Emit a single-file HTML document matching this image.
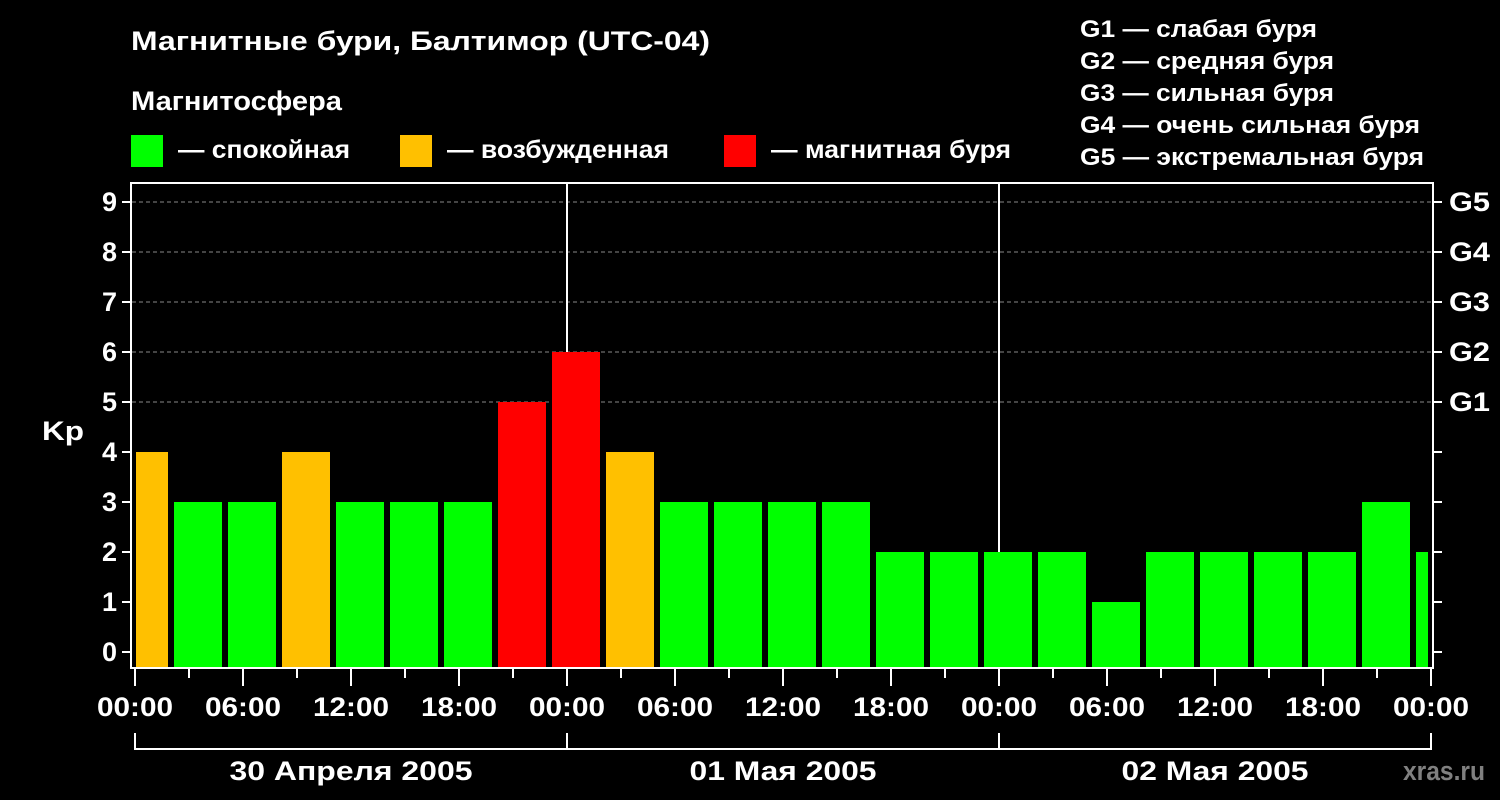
<!DOCTYPE html>
<html><head><meta charset="utf-8"><style>
html,body{margin:0;padding:0;background:#000;}
svg{display:block;}
text{font-family:"Liberation Sans",Arial,sans-serif;font-weight:bold;fill:#fff;}
</style></head><body>
<svg width="1500" height="800" viewBox="0 0 1500 800" xmlns="http://www.w3.org/2000/svg">
<rect width="1500" height="800" fill="#000"/>
<text x="131" y="50" font-size="27" textLength="579" lengthAdjust="spacingAndGlyphs">Магнитные бури, Балтимор (UTC-04)</text>
<text x="131" y="110" font-size="27" textLength="211" lengthAdjust="spacingAndGlyphs">Магнитосфера</text>
<rect x="131" y="135" width="32" height="32" fill="#00ff00"/>
<text x="178" y="158" font-size="25" textLength="172" lengthAdjust="spacingAndGlyphs">— спокойная</text>
<rect x="400" y="135" width="32" height="32" fill="#ffc000"/>
<text x="447" y="158" font-size="25" textLength="222" lengthAdjust="spacingAndGlyphs">— возбужденная</text>
<rect x="724" y="135" width="32" height="32" fill="#ff0000"/>
<text x="771" y="158" font-size="25" textLength="240" lengthAdjust="spacingAndGlyphs">— магнитная буря</text>
<g font-size="24" lengthAdjust="spacingAndGlyphs">
<text x="1080" y="37" textLength="237" lengthAdjust="spacingAndGlyphs">G1 — слабая буря</text>
<text x="1080" y="69" textLength="254" lengthAdjust="spacingAndGlyphs">G2 — средняя буря</text>
<text x="1080" y="101" textLength="254" lengthAdjust="spacingAndGlyphs">G3 — сильная буря</text>
<text x="1080" y="133" textLength="340" lengthAdjust="spacingAndGlyphs">G4 — очень сильная буря</text>
<text x="1080" y="165" textLength="344" lengthAdjust="spacingAndGlyphs">G5 — экстремальная буря</text>
</g>
<g stroke="#888" stroke-width="1" stroke-dasharray="4,3">
<line x1="132" y1="202" x2="1433" y2="202"/>
<line x1="132" y1="252" x2="1433" y2="252"/>
<line x1="132" y1="302" x2="1433" y2="302"/>
<line x1="132" y1="352" x2="1433" y2="352"/>
<line x1="132" y1="402" x2="1433" y2="402"/>
</g>
<g stroke="#fff" stroke-width="2">
<line x1="567" y1="183" x2="567" y2="668"/>
<line x1="999" y1="183" x2="999" y2="668"/>
</g>
<g>
<rect x="136" y="452" width="32" height="215" fill="#ffc000"/>
<rect x="174" y="502" width="48" height="165" fill="#00ff00"/>
<rect x="228" y="502" width="48" height="165" fill="#00ff00"/>
<rect x="282" y="452" width="48" height="215" fill="#ffc000"/>
<rect x="336" y="502" width="48" height="165" fill="#00ff00"/>
<rect x="390" y="502" width="48" height="165" fill="#00ff00"/>
<rect x="444" y="502" width="48" height="165" fill="#00ff00"/>
<rect x="498" y="402" width="48" height="265" fill="#ff0000"/>
<rect x="552" y="352" width="48" height="315" fill="#ff0000"/>
<rect x="606" y="452" width="48" height="215" fill="#ffc000"/>
<rect x="660" y="502" width="48" height="165" fill="#00ff00"/>
<rect x="714" y="502" width="48" height="165" fill="#00ff00"/>
<rect x="768" y="502" width="48" height="165" fill="#00ff00"/>
<rect x="822" y="502" width="48" height="165" fill="#00ff00"/>
<rect x="876" y="552" width="48" height="115" fill="#00ff00"/>
<rect x="930" y="552" width="48" height="115" fill="#00ff00"/>
<rect x="984" y="552" width="48" height="115" fill="#00ff00"/>
<rect x="1038" y="552" width="48" height="115" fill="#00ff00"/>
<rect x="1092" y="602" width="48" height="65" fill="#00ff00"/>
<rect x="1146" y="552" width="48" height="115" fill="#00ff00"/>
<rect x="1200" y="552" width="48" height="115" fill="#00ff00"/>
<rect x="1254" y="552" width="48" height="115" fill="#00ff00"/>
<rect x="1308" y="552" width="48" height="115" fill="#00ff00"/>
<rect x="1362" y="502" width="48" height="165" fill="#00ff00"/>
<rect x="1416" y="552" width="12" height="115" fill="#00ff00"/>
</g>
<g stroke="#fff" stroke-width="2" fill="none">
<rect x="131" y="183" width="1302" height="485"/>
<path d="M122 202H131M122 252H131M122 302H131M122 352H131M122 402H131M122 452H131M122 502H131M122 552H131M122 602H131M122 652H131"/>
<path d="M1433 202H1442M1433 252H1442M1433 302H1442M1433 352H1442M1433 402H1442M1433 452H1442M1433 502H1442M1433 552H1442M1433 602H1442M1433 652H1442"/>
<path d="M135 668V686M567 668V686M999 668V686M1431 668V686"/>
<path d="M189 668V678M243 668V686M297 668V678M351 668V686M405 668V678M459 668V686M513 668V678M621 668V678M675 668V686M729 668V678M783 668V686M837 668V678M891 668V686M945 668V678M1053 668V678M1107 668V686M1161 668V678M1215 668V686M1269 668V678M1323 668V686M1377 668V678"/>
<path d="M135 733V749H1431V733M567 733V749M999 733V749"/>
</g>
<g font-size="27" text-anchor="end">
<text x="117" y="211">9</text><text x="117" y="261">8</text><text x="117" y="311">7</text>
<text x="117" y="361">6</text><text x="117" y="411">5</text><text x="117" y="461">4</text>
<text x="117" y="511">3</text><text x="117" y="561">2</text><text x="117" y="611">1</text>
<text x="117" y="661">0</text>
</g>
<text x="42" y="440" font-size="27" textLength="42" lengthAdjust="spacingAndGlyphs">Kp</text>
<g font-size="27">
<text x="1449" y="211" textLength="41" lengthAdjust="spacingAndGlyphs">G5</text><text x="1449" y="261" textLength="41" lengthAdjust="spacingAndGlyphs">G4</text><text x="1449" y="311" textLength="41" lengthAdjust="spacingAndGlyphs">G3</text>
<text x="1449" y="361" textLength="41" lengthAdjust="spacingAndGlyphs">G2</text><text x="1449" y="411" textLength="41" lengthAdjust="spacingAndGlyphs">G1</text>
</g>
<g font-size="27" text-anchor="middle">
<text x="135" y="716" textLength="76" lengthAdjust="spacingAndGlyphs">00:00</text><text x="243" y="716" textLength="76" lengthAdjust="spacingAndGlyphs">06:00</text><text x="351" y="716" textLength="76" lengthAdjust="spacingAndGlyphs">12:00</text>
<text x="459" y="716" textLength="76" lengthAdjust="spacingAndGlyphs">18:00</text><text x="567" y="716" textLength="76" lengthAdjust="spacingAndGlyphs">00:00</text><text x="675" y="716" textLength="76" lengthAdjust="spacingAndGlyphs">06:00</text>
<text x="783" y="716" textLength="76" lengthAdjust="spacingAndGlyphs">12:00</text><text x="891" y="716" textLength="76" lengthAdjust="spacingAndGlyphs">18:00</text><text x="999" y="716" textLength="76" lengthAdjust="spacingAndGlyphs">00:00</text>
<text x="1107" y="716" textLength="76" lengthAdjust="spacingAndGlyphs">06:00</text><text x="1215" y="716" textLength="76" lengthAdjust="spacingAndGlyphs">12:00</text><text x="1323" y="716" textLength="76" lengthAdjust="spacingAndGlyphs">18:00</text>
<text x="1431" y="716" textLength="76" lengthAdjust="spacingAndGlyphs">00:00</text>
<text x="351" y="780" textLength="243" lengthAdjust="spacingAndGlyphs">30 Апреля 2005</text>
<text x="783" y="780" textLength="187" lengthAdjust="spacingAndGlyphs">01 Мая 2005</text>
<text x="1215" y="780" textLength="187" lengthAdjust="spacingAndGlyphs">02 Мая 2005</text>
</g>
<text x="1403" y="780" font-size="27" textLength="82" lengthAdjust="spacingAndGlyphs" style="fill:#808080">xras.ru</text>
</svg>
</body></html>
